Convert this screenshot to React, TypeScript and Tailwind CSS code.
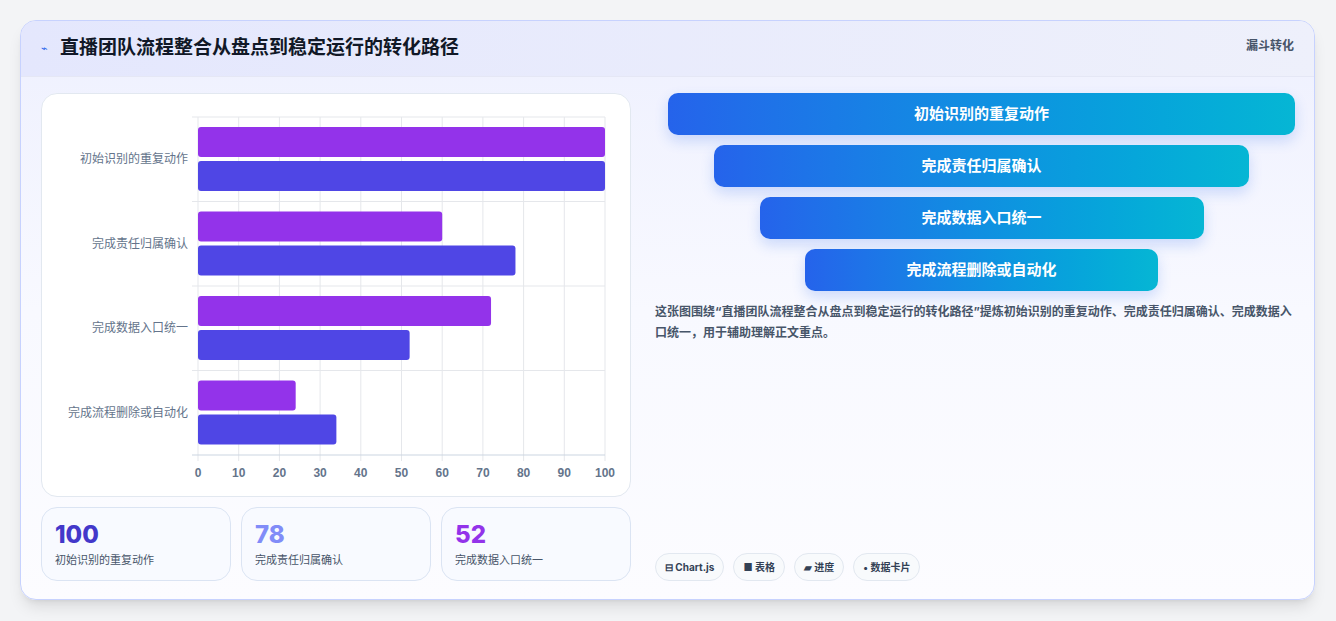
import React from "react";

const cats = ["初始识别的重复动作", "完成责任归属确认", "完成数据入口统一", "完成流程删除或自动化"];
const a = [100, 60, 72, 24];
const b = [100, 78, 52, 34];

function Chart() {
  const x0 = 156, x1 = 563, y0 = 23, y1 = 361;
  const band = (y1 - y0) / 4;
  const sx = (v: number) => x0 + ((x1 - x0) * v) / 100;
  return (
    <svg width="588" height="402" className="block">
      {Array.from({ length: 11 }).map((_, i) => (
        <line key={i} x1={sx(i * 10)} x2={sx(i * 10)} y1={y0} y2={y1 + (i === 0 ? 6 : 6)} stroke="#e5e7eb" />
      ))}
      {Array.from({ length: 5 }).map((_, i) => (
        <line key={i} x1={x0 - 6} x2={x1} y1={y0 + band * i} y2={y0 + band * i} stroke={i === 4 ? "#cbd5e1" : "#e5e7eb"} />
      ))}
      {cats.map((c, i) => {
        const top = y0 + band * i;
        return (
          <g key={c}>
            <rect x={x0} y={top + 10} width={sx(a[i]) - x0} height={30} rx={3} fill="#9333ea" />
            <rect x={x0} y={top + 44} width={sx(b[i]) - x0} height={30} rx={3} fill="#4f46e5" />
            <text x={x0 - 10} y={top + band / 2 + 4} textAnchor="end" fontSize="12" fill="#64748b" fontFamily="'Noto Sans CJK SC', sans-serif">{c}</text>
          </g>
        );
      })}
      {Array.from({ length: 11 }).map((_, i) => (
        <text key={i} x={sx(i * 10)} y={383} textAnchor="middle" fontSize="12" fontWeight="bold" fill="#64748b" fontFamily="'Liberation Sans', sans-serif">{i * 10}</text>
      ))}
    </svg>
  );
}

export default function App() {
  const funnel = [
    { t: "初始识别的重复动作", w: 627 },
    { t: "完成责任归属确认", w: 535 },
    { t: "完成数据入口统一", w: 444 },
    { t: "完成流程删除或自动化", w: 353 },
  ];
  const stats = [
    { v: "100", c: "text-[#4338ca]", l: "初始识别的重复动作" },
    { v: "78", c: "text-[#818cf8]", l: "完成责任归属确认" },
    { v: "52", c: "text-[#9333ea]", l: "完成数据入口统一" },
  ];
  return (
    <div className="w-[1336px] h-[621px] bg-[#f3f4f6] p-5 pb-0" style={{ fontFamily: "Inter, 'Noto Sans CJK SC', sans-serif" }}>
      <div className="w-[1295px] h-[580px] rounded-2xl border border-[#c7d2fe] bg-gradient-to-b from-[#eef0fe] via-[#f8f9ff] to-[#fcfcff] shadow-lg overflow-hidden flex flex-col">
        <div className="h-[56px] flex items-center justify-between pl-5 pr-5 bg-gradient-to-r from-[#e4e7fd] to-[#eef0fb] border-b border-[#e5e7f5]">
          <div className="flex items-center gap-3">
            <span className="text-[#2563eb] text-[11px]">⌁</span>
            <span className="text-[19px] font-bold text-[#111827]">直播团队流程整合从盘点到稳定运行的转化路径</span>
          </div>
          <span className="text-[12px] font-bold text-[#475569] self-start mt-4">漏斗转化</span>
        </div>
        <div className="flex gap-4 px-5 pt-4 flex-1">
          <div className="w-[590px] flex flex-col gap-[10px]">
            <div className="h-[404px] rounded-2xl bg-white border border-[#e2e8f0]">
              <Chart />
            </div>
            <div className="grid grid-cols-3 gap-[10px]">
              {stats.map((s) => (
                <div key={s.v} className="h-[74px] rounded-2xl border border-[#dbe4f3] bg-[#f8faff] px-[13px] pt-[13px]">
                  <div className={`text-[24px] leading-[28px] font-extrabold ${s.c}`}>{s.v}</div>
                  <div className="text-[11px] text-[#475569] mt-[3px]">{s.l}</div>
                </div>
              ))}
            </div>
          </div>
          <div className="flex-1 flex flex-col pl-[8px]">
            <div className="flex flex-col items-center gap-[10px] w-[627px] ml-[13px]">
              {funnel.map((f) => (
                <div key={f.t} style={{ width: f.w }} className="h-[42px] rounded-[10px] bg-gradient-to-r from-[#2563eb] to-[#06b6d4] flex items-center justify-center text-white font-bold text-[15px] shadow-[0_6px_14px_rgba(37,99,235,0.2)]">
                  {f.t}
                </div>
              ))}
            </div>
            <p className="mt-[10px] text-[12px] leading-[21px] font-bold text-[#475569]">
              这张图围绕“直播团队流程整合从盘点到稳定运行的转化路径”提炼初始识别的重复动作、完成责任归属确认、完成数据入口统一，用于辅助理解正文重点。
            </p>
            <div className="mt-auto mb-[18px] flex gap-[9px]">
              {["⊟ Chart.js", "■ 表格", "▰ 进度", "• 数据卡片"].map((c) => (
                <span key={c} className="h-[28px] px-[9px] rounded-full border border-[#e2e8f0] bg-[#f8fafc] text-[10px] font-bold text-[#334155] flex items-center">{c}</span>
              ))}
            </div>
          </div>
        </div>
      </div>
    </div>
  );
}
